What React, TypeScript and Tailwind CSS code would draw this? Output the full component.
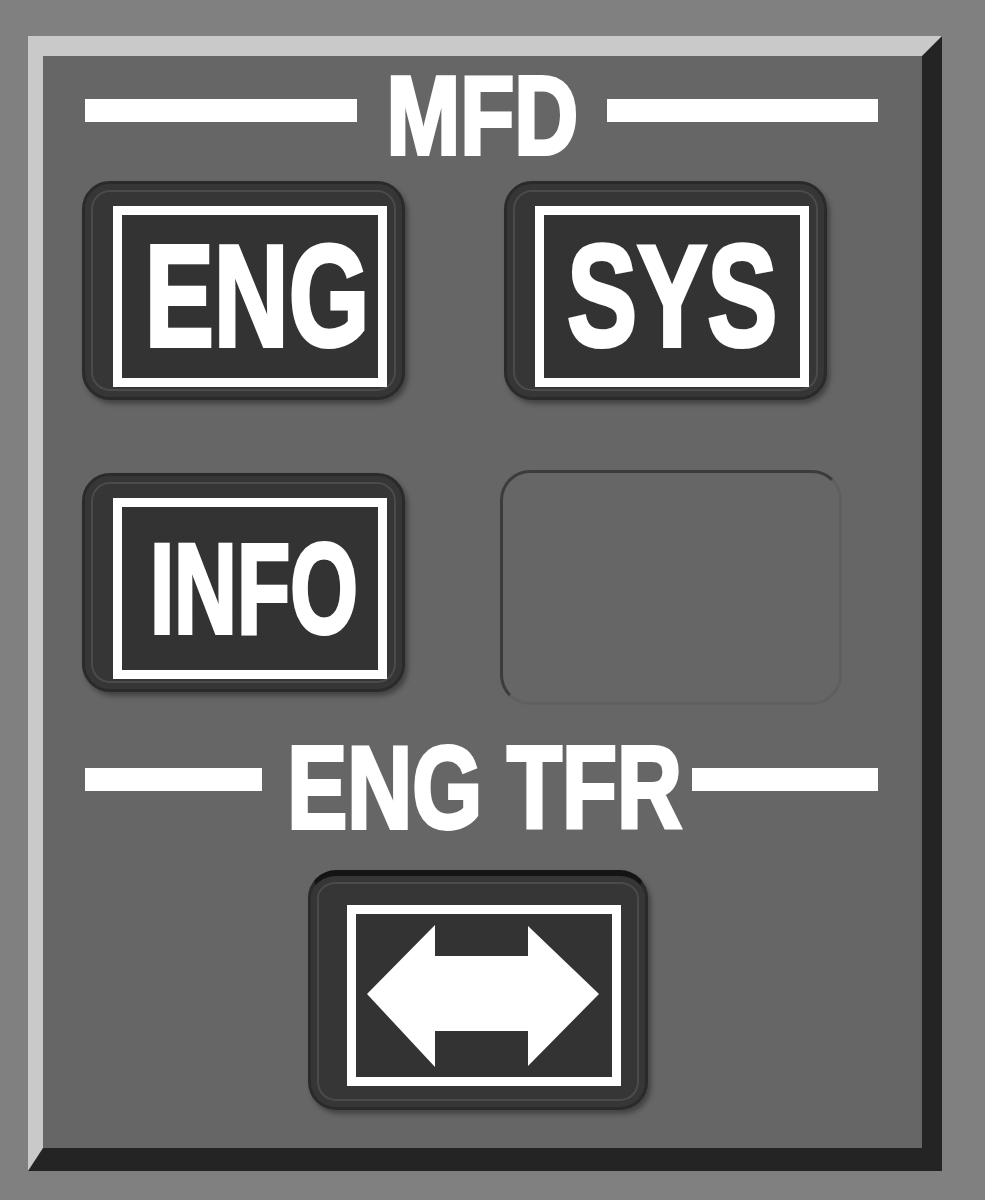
import React from "react";

const font = "font-['Liberation_Sans',Arial,Helvetica,sans-serif]";

function Bezel({
  children,
  w,
  h,
  pl,
  pt,
  arrow = false,
}: {
  children: React.ReactNode;
  w: string;
  h: string;
  pl: string;
  pt: string;
  arrow?: boolean;
}) {
  return (
    <div
      className={`${w} ${h} ${pl} ${pt} shrink-0 rounded-[28px] bg-[#363636] border-[3px] border-[#2a2a2a] ${
        arrow ? "border-t-[#141414] border-t-[6px]" : ""
      } shadow-[inset_0_0_0_6px_#363636,inset_0_0_0_8px_#4b4b4b,3px_4px_5px_rgba(0,0,0,0.35)]`}
    >
      <div className="w-[274px] h-[181px] border-[9px] border-white bg-[#333333] flex items-center justify-center overflow-visible">
        {children}
      </div>
    </div>
  );
}

function Label({ text, size, scale, shift }: { text: string; size: string; scale: string; shift?: string }) {
  return (
    <div className={`flex items-center justify-center w-full h-full ${shift ?? ""}`}>
      <span
        className={`block ${font} font-bold text-white leading-none whitespace-nowrap [-webkit-text-stroke:4px_#ffffff] ${size} ${scale}`}
      >
        {text}
      </span>
    </div>
  );
}

export default function App() {
  return (
    <div className="w-[985px] h-[1200px] bg-[#808080] pt-[36px] pl-[28px]">
      <div className="w-[914px] h-[1135px] bg-[#666666] border-l-[15px] border-t-[20px] border-r-[20px] border-b-[23px] border-l-[#c9c9c9] border-t-[#c9c9c9] border-r-[#242424] border-b-[#242424] flex flex-col">
        {/* MFD heading */}
        <div className="h-[125px] flex items-start pl-[42px] shrink-0">
          <div className="mt-[43px] w-[272px] h-[23px] bg-white shrink-0" />
          <div className="w-[250px] flex justify-center mt-[4px] shrink-0">
            <span
              className={`block ${font} font-bold text-white leading-none text-[112px] scale-x-[0.79] whitespace-nowrap [-webkit-text-stroke:4px_#ffffff]`}
            >
              MFD
            </span>
          </div>
          <div className="mt-[43px] w-[271px] h-[23px] bg-white shrink-0" />
        </div>

        {/* Row 1 */}
        <div className="h-[219px] flex items-start pl-[39px] gap-[99px] shrink-0">
          <Bezel w="w-[323px]" h="h-[219px]" pl="pl-[28px]" pt="pt-[22px]">
            <Label text="ENG" size="text-[144px]" scale="scale-x-[0.72]" shift="pl-[14px]" />
          </Bezel>
          <Bezel w="w-[323px]" h="h-[219px]" pl="pl-[28px]" pt="pt-[22px]">
            <Label text="SYS" size="text-[144px]" scale="scale-x-[0.73]" />
          </Bezel>
        </div>

        {/* Row 2 */}
        <div className="mt-[73px] h-[219px] flex items-start pl-[39px] gap-[99px] shrink-0">
          <Bezel w="w-[323px]" h="h-[219px]" pl="pl-[28px]" pt="pt-[22px]">
            <Label text="INFO" size="text-[128px]" scale="scale-x-[0.68]" shift="pl-[8px]" />
          </Bezel>
          <div className="-ml-[4px] -mt-[3px] w-[342px] h-[235px] shrink-0 rounded-[30px] border-[3px] border-t-[#3c3c3c] border-l-[#3c3c3c] border-r-[#5f5f5f] border-b-[#606060] bg-[#666666]" />
        </div>

        {/* ENG TFR heading */}
        <div className="mt-[38px] h-[116px] flex items-start pl-[42px] shrink-0">
          <div className="mt-[38px] w-[177px] h-[23px] bg-white shrink-0" />
          <div className="w-[430px] flex justify-center pl-[16px] shrink-0">
            <span
              className={`block ${font} font-bold text-white leading-none text-[116px] scale-x-[0.775] whitespace-nowrap [-webkit-text-stroke:4px_#ffffff]`}
            >
              ENG TFR
            </span>
          </div>
          <div className="mt-[38px] w-[186px] h-[23px] bg-white shrink-0" />
        </div>

        {/* Arrow button */}
        <div className="mt-[24px] pl-[265px] flex shrink-0">
          <Bezel w="w-[340px]" h="h-[240px]" pl="pl-[36px]" pt="pt-[29px]" arrow>
            <svg width="256" height="163" viewBox="357 915 256 163" className="block">
              <path
                d="M368 995 L436 926 L436 957 L529 957 L529 927 L600 995 L529 1067 L529 1032 L436 1032 L436 1068 Z"
                fill="#ffffff"
              />
            </svg>
          </Bezel>
        </div>
      </div>
    </div>
  );
}
